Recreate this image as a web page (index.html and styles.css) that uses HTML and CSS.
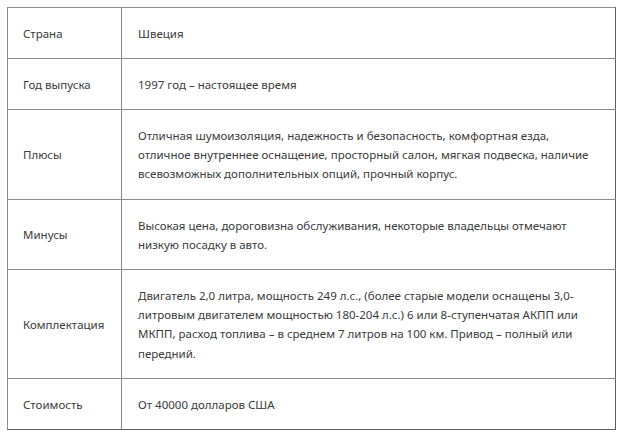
FILE: index.html
```html
<!DOCTYPE html>
<html lang="ru">
<head>
<meta charset="utf-8">
<link rel="stylesheet" href="styles.css">
</head>
<body>
<table class="spec">
  <tr><td class="k">Страна</td><td class="v">Швеция</td></tr>
  <tr><td class="k">Год выпуска</td><td class="v">1997 год – настоящее время</td></tr>
  <tr><td class="k">Плюсы</td><td class="v">Отличная шумоизоляция, надежность и безопасность, комфортная езда, отличное внутреннее оснащение, просторный салон, мягкая подвеска, наличие всевозможных дополнительных опций, прочный корпус.</td></tr>
  <tr><td class="k">Минусы</td><td class="v">Высокая цена, дороговизна обслуживания, некоторые владельцы отмечают низкую посадку в авто.</td></tr>
  <tr><td class="k">Комплектация</td><td class="v">Двигатель 2,0 литра, мощность 249 л.с., (более старые модели оснащены 3,0-литровым двигателем мощностью 180-204 л.с.) 6 или 8-ступенчатая АКПП или МКПП, расход топлива – в среднем 7 литров на 100 км. Привод – полный или передний.</td></tr>
  <tr><td class="k">Стоимость</td><td class="v">От 40000 долларов США</td></tr>
</table>
</body>
</html>
```
FILE: styles.css
```css
html, body { margin: 0; padding: 0; background: #fff; }
body { padding: 7px; font-family: "Noto Sans", "DejaVu Sans", sans-serif; font-size: 11.5px; line-height: 19.2px; color: #3a3a3a; }
.spec { border-collapse: collapse; width: 609px; table-layout: fixed; }
.spec td { border: 1px solid #8c8c8c; padding: 15.5px 15px; vertical-align: middle; }
.spec .k { width: 83px; }
.spec .v { padding-left: 16px; padding-right: 24px; }
.spec td.v { border-right-color: #5f5f5f; }
.spec tr:last-child td { border-bottom-color: #5f5f5f; }
```
